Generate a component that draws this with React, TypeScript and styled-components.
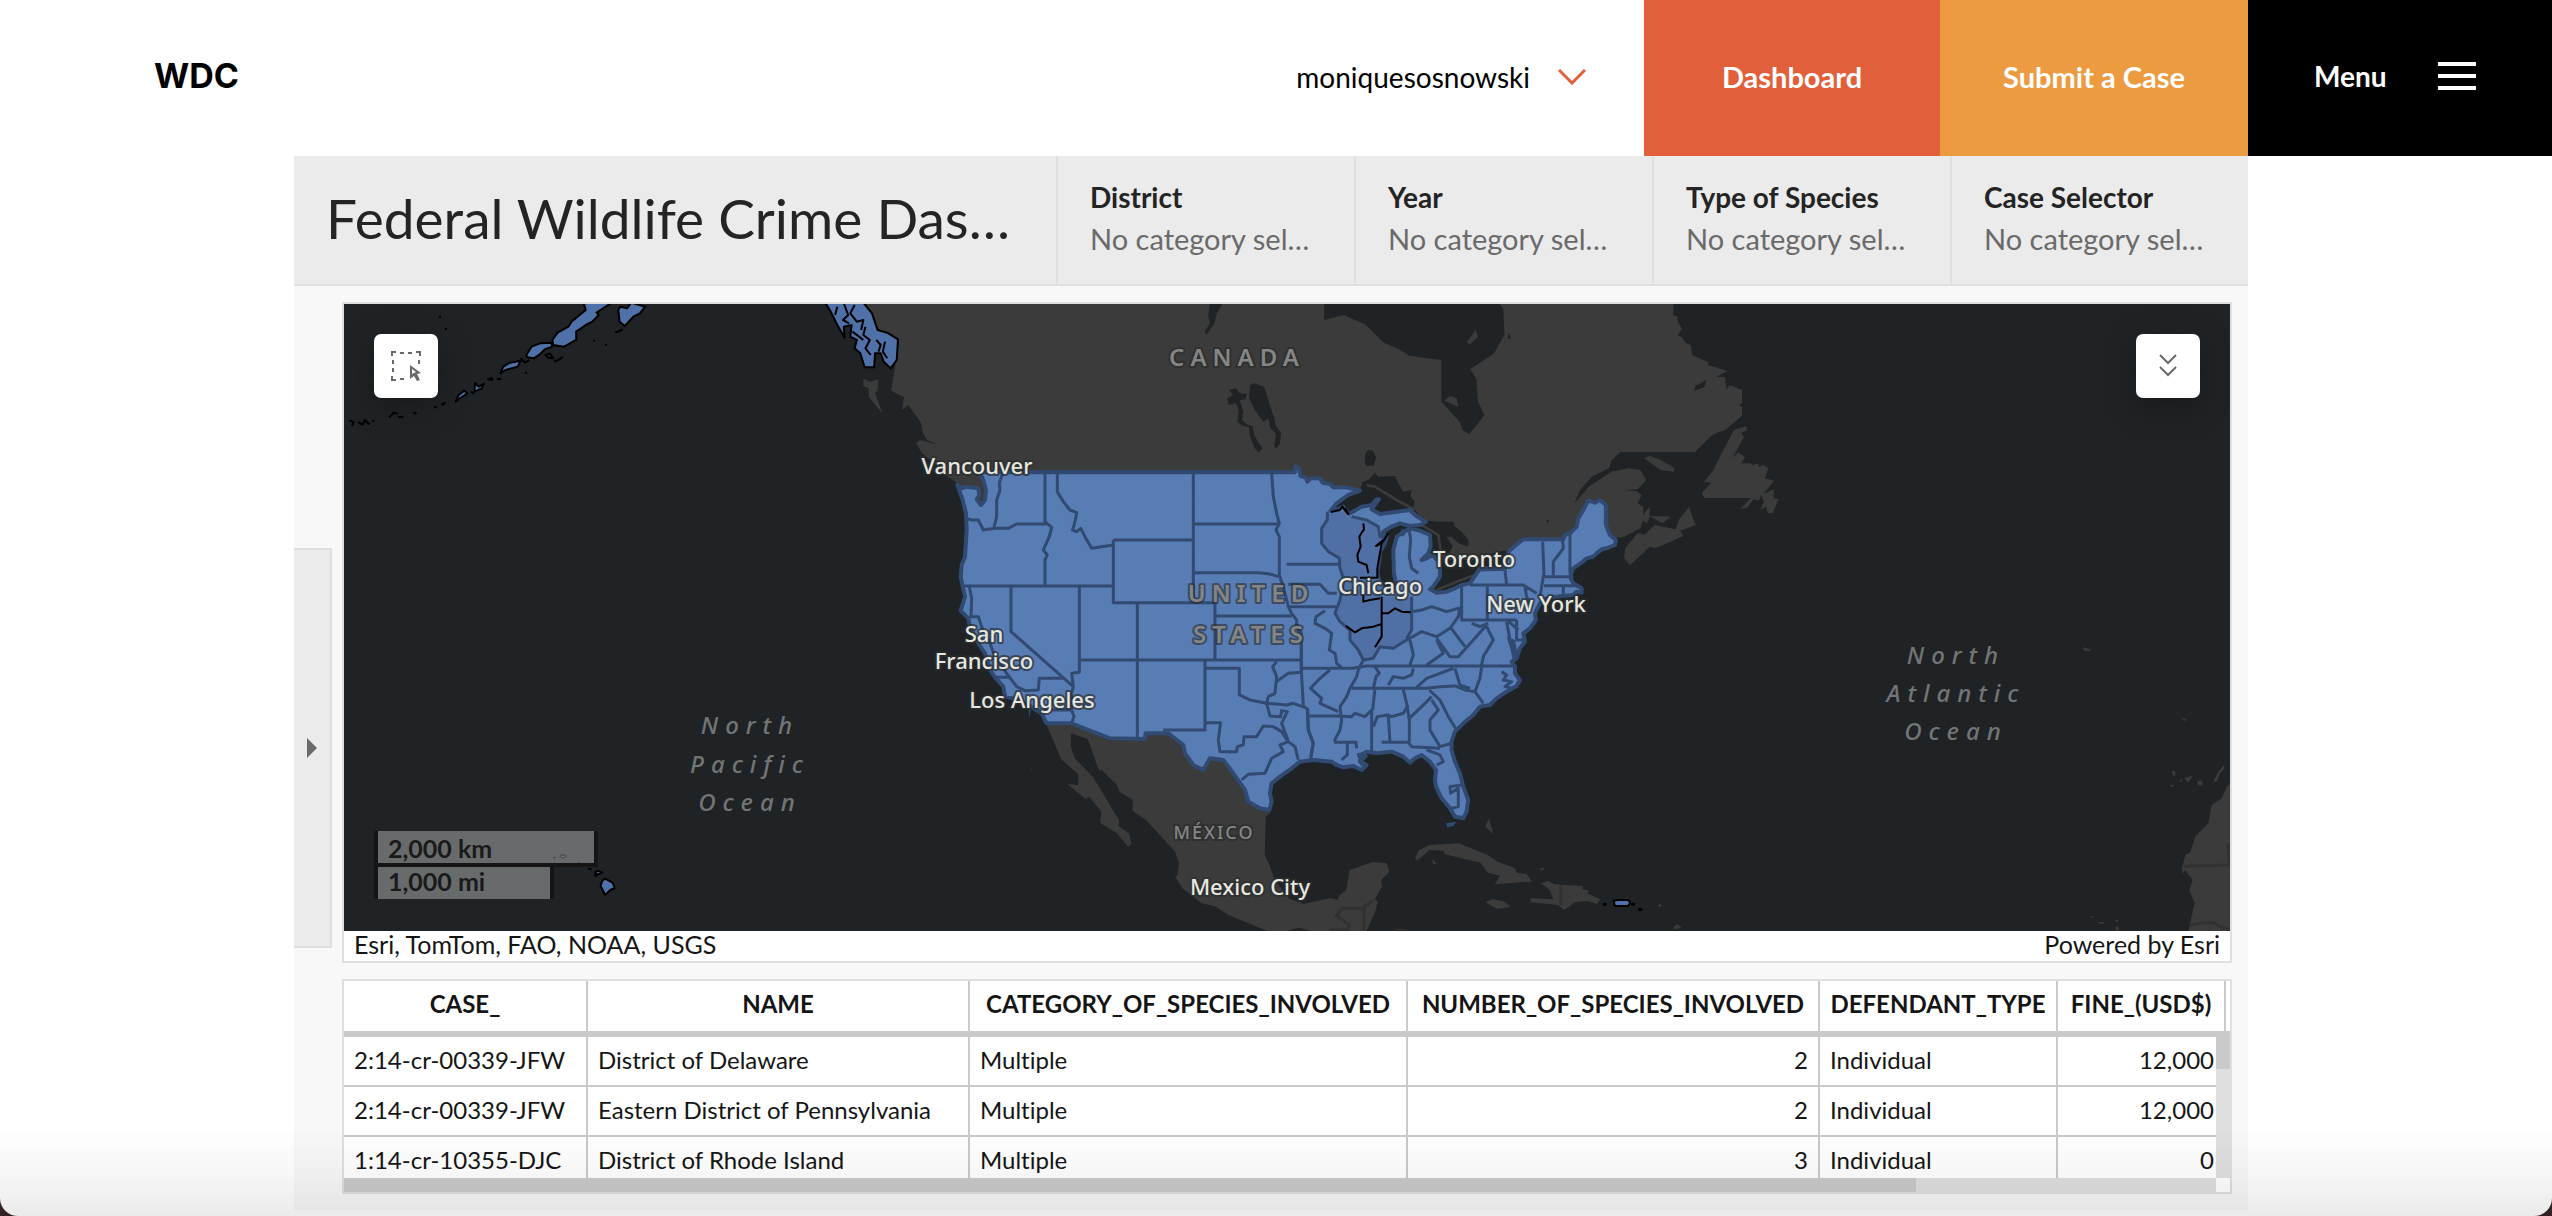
import React from "react";
import styled, { createGlobalStyle } from "styled-components";

const GlobalStyle = createGlobalStyle`
  *, *::before, *::after { box-sizing: border-box; }
  html { background: #3a2426; }
  body {
    margin: 0;
    color: #151515;
    font-family: Lato, "Open Sans", sans-serif;
    font-size: 24px;
    font-variant-ligatures: none;
    line-height: 32px;
  }
  button { margin: 0; padding: 0; border: 0; font: inherit; font-variant-ligatures: none; color: inherit; cursor: pointer; }
  a { color: inherit; text-decoration: none; }
`;

/* ---------- page shell ---------- */

const Page = styled.div`
  display: flex;
  flex-direction: column;
  height: 100vh;
  padding-bottom: 6px;
  border-radius: 0 0 18px 18px;
  background: #ffffff;
  overflow: hidden;
`;

const TopBar = styled.header`
  display: flex;
  flex: none;
  height: 156px;
  font-size: 28px;
  line-height: 36px;
`;

const Brand = styled.a`
  display: flex;
  align-items: center;
  margin-right: auto;
  padding: 0 0 4px 154px;
  color: #000000;
  font-family: Inter, sans-serif;
  font-size: 34px;
  font-weight: 700;
`;

const UserMenu = styled.button`
  display: flex;
  align-items: center;
  gap: 28px;
  padding: 0 58px 2px 0;
  background: none;
  color: #000000;
`;

const NavLink = styled.a<{ $bg: string; $width: number }>`
  display: flex;
  align-items: center;
  justify-content: center;
  width: ${(p) => p.$width}px;
  padding-bottom: 2px;
  background: ${(p) => p.$bg};
  color: #ffffff;
  font-size: 29px;
  font-weight: 700;
`;

const MenuButton = styled.button`
  display: flex;
  align-items: center;
  justify-content: space-between;
  width: 304px;
  padding: 0 76px 4px 66px;
  background: #000000;
  color: #ffffff;
  font-weight: 700;
`;

const Burger = styled.span`
  display: block;
  width: 38px;
  height: 28px;
  border-top: 4px solid #ffffff;
  border-bottom: 4px solid #ffffff;
  padding: 8px 0;
  &::before { content: ""; display: block; height: 4px; background: #ffffff; }
`;

/* ---------- dashboard ---------- */

const Dashboard = styled.main`
  display: flex;
  flex: 1;
  flex-direction: column;
  min-height: 0;
  margin: 0 304px 0 294px;
  background: #f8f8f8;
`;

const DashHeader = styled.div`
  display: flex;
  flex: none;
  height: 130px;
  border-bottom: 2px solid #dfdfdf;
  background: #ebebeb;
`;

const DashTitle = styled.h1`
  flex: 1;
  min-width: 0;
  margin: 0;
  padding: 0 32px;
  color: #242424;
  font-size: 55px;
  font-weight: 400;
  line-height: 124px;
  white-space: nowrap;
`;

const Selector = styled.button`
  display: flex;
  flex-direction: column;
  justify-content: center;
  gap: 6px;
  width: 298px;
  padding: 0 32px 4px;
  border-left: 2px solid #dfdfdf;
  background: none;
  font-size: 28px;
  line-height: 36px;
  text-align: left;
  white-space: nowrap;
`;

const SelectorName = styled.span`
  color: #242424;
  font-weight: 700;
`;

const SelectorValue = styled.span`
  color: #6a6a6a;
  font-size: 29px;
`;

const DashBody = styled.div`
  display: flex;
  flex: 1;
  align-items: center;
  gap: 10px;
  min-height: 0;
`;

const Drawer = styled.button`
  display: flex;
  flex: none;
  align-items: center;
  justify-content: center;
  width: 38px;
  height: 400px;
  border: 2px solid #dfdfdf;
  border-left: 0;
  background: #ebebeb;
`;

const Widgets = styled.div`
  display: flex;
  flex: 1;
  flex-direction: column;
  align-self: stretch;
  gap: 16px;
  min-width: 0;
  padding: 16px 16px 16px 0;
`;

const Card = styled.section<{ $grow?: boolean }>`
  display: flex;
  flex-direction: column;
  flex: ${(p) => (p.$grow ? "1" : "none")};
  min-height: 0;
  border: 2px solid #dfdfdf;
  background: #ffffff;
`;

const MapView = styled.div`
  position: relative;
  flex: 1;
  min-height: 0;
  background: #1f2325;
  overflow: hidden;
`;

const MapSvg = styled.svg`
  display: block;
  width: 100%;
  height: 100%;
`;

const MapTool = styled.button<{ $side: "left" | "right" }>`
  position: absolute;
  top: 30px;
  ${(p) => p.$side}: 30px;
  display: flex;
  align-items: center;
  justify-content: center;
  width: 64px;
  height: 64px;
  border-radius: 7px;
  background: #ffffff;
  box-shadow: 0 8px 32px rgba(0, 0, 0, 0.25);
`;

const ScaleBar = styled.div`
  position: absolute;
  left: 30px;
  bottom: 32px;
  display: flex;
  flex-direction: column;
  align-items: flex-start;
  color: #1a1a1a;
  font-size: 25px;
  font-weight: 700;
`;

const ScaleRow = styled.div<{ $width: number; $first?: boolean }>`
  width: ${(p) => p.$width}px;
  height: ${(p) => (p.$first ? 36 : 32)}px;
  padding-left: 10px;
  border: solid #151515;
  border-width: ${(p) => (p.$first ? "0 4px 4px" : "0 4px")};
  background: rgba(255, 255, 255, 0.33);
  background-clip: padding-box;
  line-height: ${(p) => (p.$first ? 34 : 28)}px;
`;

const Attribution = styled.footer`
  display: flex;
  flex: none;
  justify-content: space-between;
  height: 30px;
  padding: 0 10px;
  font-size: 25px;
  line-height: 27px;
`;

/* ---------- table ---------- */

const TableView = styled.div`
  position: relative;
  height: 211px;
  overflow: hidden;
`;

const Table = styled.table`
  width: 100%;
  table-layout: fixed;
  border-collapse: separate;
  border-spacing: 0;
  color: #151515;
  white-space: nowrap;
`;

const HeadCell = styled.th`
  height: 56px;
  padding: 0 0 4px;
  border-right: 2px solid #cacaca;
  border-bottom: 6px solid #cacaca;
  font-weight: 700;
  text-align: center;
  &:last-child { border-right: 0; }
`;

const Cell = styled.td<{ $numeric?: boolean }>`
  height: 50px;
  padding: 0 10px 3px;
  border-right: 2px solid #cacaca;
  border-bottom: 2px solid #cacaca;
  text-align: ${(p) => (p.$numeric ? "right" : "left")};
  &:last-child { border-right: 0; }
`;

const ScrollX = styled.div`
  position: absolute;
  right: 0;
  bottom: 0;
  left: 0;
  height: 14px;
  padding-right: 14px;
  background: linear-gradient(to left, #ffffff 14px, #dfdfdf 14px);
  &::before { content: ""; display: block; width: 84%; height: 100%; background: #cacaca; }
`;

const ScrollY = styled.div`
  position: absolute;
  top: 50px;
  right: 0;
  bottom: 14px;
  width: 14px;
  background: #dfdfdf;
  &::before { content: ""; display: block; height: 38px; background: #cacaca; }
`;

const BottomFade = styled.div`
  position: fixed;
  right: 0;
  bottom: 0;
  left: 0;
  height: 90px;
  background: linear-gradient(to bottom, rgba(0, 0, 0, 0), rgba(0, 0, 0, 0.03) 50%, rgba(0, 0, 0, 0.08));
  pointer-events: none;
`;

/* ---------- map drawing ---------- */

const Land = styled.path`
  fill: #3a3b3a;
`;

const Water = styled.path`
  fill: #1f2325;
`;

const LandBorder = styled.path`
  fill: none;
  stroke: #303130;
  stroke-width: 3px;
  vector-effect: non-scaling-stroke;
`;

const District = styled.path`
  fill: #587cb4;
  stroke: #304a71;
  stroke-width: 4px;
  stroke-linejoin: round;
  vector-effect: non-scaling-stroke;
`;

const DistrictLine = styled(District)`
  fill: none;
  stroke-width: 3px;
`;

const Shade = styled.path`
  fill: #4f6fa5;
`;

const Coast = styled.path`
  fill: #4f71a8;
  stroke: #000000;
  stroke-width: 2px;
  stroke-linejoin: round;
  vector-effect: non-scaling-stroke;
`;

const BlackLine = styled(Coast)`
  fill: none;
`;

const Place = styled.text<{ $kind: "city" | "country" | "ocean" | "small" }>`
  font-family: "Noto Sans", "Open Sans", sans-serif;
  text-anchor: middle;
  paint-order: stroke;
  stroke-linejoin: round;
  ${(p) =>
    p.$kind === "city" &&
    "font-size: 22px; font-weight: 500; fill: #e6e7e0; stroke: rgba(44,46,46,.7); stroke-width: 4px;"}
  ${(p) =>
    p.$kind === "country" &&
    "font-size: 24px; font-weight: 600; fill: #858585; letter-spacing: 6px; stroke: rgba(40,42,42,.6); stroke-width: 4px;"}
  ${(p) =>
    p.$kind === "small" &&
    "font-size: 18px; font-weight: 500; fill: #858585; letter-spacing: 2px; stroke: rgba(40,42,42,.6); stroke-width: 4px;"}
  ${(p) =>
    p.$kind === "ocean" &&
    "font-size: 24px; font-style: italic; font-weight: 500; fill: #727576; letter-spacing: 7px;"}
`;

type Label = [string, number, number, "city" | "country" | "ocean" | "small"];

const labels: Label[] = [
  ["CANADA", 1237, 366, "country"],
  ["UNITED", 1251, 602, "country"],
  ["STATES", 1251, 643, "country"],
  ["MÉXICO", 1214, 839, "small"],
  ["Vancouver", 977, 474, "city"],
  ["San", 984, 642, "city"],
  ["Francisco", 984, 669, "city"],
  ["Los Angeles", 1032, 708, "city"],
  ["Chicago", 1380, 594, "city"],
  ["Toronto", 1474, 567, "city"],
  ["New York", 1536, 612, "city"],
  ["Mexico City", 1250, 895, "city"],
  ["North", 750, 734, "ocean"],
  ["Pacific", 750, 773, "ocean"],
  ["Ocean", 750, 811, "ocean"],
  ["North", 1956, 664, "ocean"],
  ["Atlantic", 1956, 702, "ocean"],
  ["Ocean", 1956, 740, "ocean"],
];

const westLines = `M308,100 L298,130 300,150 290,180 290,230 282,262
M198,235 L215,240 235,240 250,270 285,265 325,265 350,252 440,252
M435,100 V245 L455,262 448,290 430,330 442,345 435,360 V438
M472,100 V155 L490,185 510,210 530,218 525,245 518,270 530,275 542,265 555,290 575,325 605,320 640,315
M188,438 H638 M640,300 V488 H945 M640,300 H880 M880,100 V488 M880,398 H1075 L1110,402 1135,410 M880,252 H1135
M1115,100 L1120,170 1130,220 1138,250 1128,270 1138,290 V405 L1150,440 1165,500 1175,520 1190,540 1190,560 1204,580 V700
M538,438 V697 L515,700 520,740 515,760 515,810 522,830 515,850
M712,488 V895 M945,488 V660 M945,528 H1175 M538,660 H1204 M333,438 V575 L520,740
M208,440 L215,475 213,530 235,530 245,560 270,610 285,650 320,700 350,740 375,752 415,750 418,715 H490
M285,712 H330 M430,810 H520
M915,660 V870 H790 M915,685 H1018 V765 L1050,780 1100,790 1160,795 1180,790 1222,805
M918,848 H962 L955,900 960,935 1010,935 1012,920 1030,915 1032,890 1070,890 1090,858 1120,860 1145,875 1165,905 1160,890 1145,850 1162,815 1145,812 1142,830 1110,828 1100,790 1105,770 1125,760 1130,710 1118,680 1130,665
M1130,725 L1165,700 1204,697 M1222,805 L1225,870 1240,910 1232,960
M1025,1020 L1045,1003 1095,1000 1115,955 1150,935 1140,915 1165,905 1185,920 1195,960 M1165,500 H1308 M1160,373 H1318`;

const eastLines = `M262,215 V240 L245,265 245,310 265,335 298,355 300,385 312,420 300,480 285,520 300,545 330,570 330,600 355,630 370,660 355,690 350,710 330,745 320,770 300,800 305,840 300,870 282,905
M145,433 H240 L265,460 290,460 M255,512 L228,530 225,550 255,565 275,580 268,630 285,640 290,670 305,682
M185,685 H340 L355,682 380,678 H820 M184,610 V690 L190,800
M270,690 L240,715 212,745 245,775 240,790 295,815 M203,828 H300 L335,830 345,820 375,830 395,810
M203,805 L205,870 220,910 212,950 M282,907 H348 L350,925 M322,910 V945 L305,960 M395,810 V935
M335,745 H560 L600,740 645,738 675,750 705,755 M405,745 L398,810 M490,750 L500,790 508,840 V905
M400,860 L412,830 445,825 455,830 490,820 505,795 M445,830 L450,905 M425,907 H505 L515,920 600,925
M400,745 L408,710 418,700 405,680 M445,735 L460,710 490,715 515,705 520,685 M530,742 L560,715 600,700 640,685
M645,685 L660,735 690,745 M725,680 L720,715 705,755 730,790 M568,750 L600,780 625,830 650,870
M508,835 L545,800 575,770 M575,780 L595,810 570,840 570,870 600,920 635,910
M560,930 L600,945 610,965 590,975 M665,1035 L630,1040 632,1060 655,1045 655,1100 635,1105
M515,515 L545,510 575,500 620,515 655,505 M515,470 V570 L500,595
M370,660 L400,655 420,620 460,625 500,600 545,575 590,590 630,565 655,530 660,500
M510,600 L520,645 510,675 M590,600 L610,640 560,675 M590,595 L630,650 655,650 740,555 M630,560 L675,620
M740,560 L760,600 730,650 725,675 M665,440 V540 H830 M742,440 V540 M690,435 H850 L890,460 M695,550 L720,560 745,550
M830,540 V600 L860,600 M800,545 L810,600 825,650 M715,390 L800,388 M795,390 L800,435 M800,540 L835,570
M908,305 L912,400 905,440 M968,300 L970,325 940,365 940,405 M990,280 V400 M915,410 H1000 M912,437 H1010 M970,440 V465
M905,440 L900,470 M855,440 L860,470 875,500 M335,230 L380,240 415,260 420,290 435,280 M508,270 L512,300 508,350 515,385 535,400
M785,695 L800,705 790,720 815,725 795,740 815,745`;

const usOutline = `M172,135 L185,145 200,140 235,145 238,165 230,178 243,195 255,180 258,150 250,120 240,97 H1185 L1187,78 1198,88
1202,108 1218,112 1222,125 1232,115 1260,115 1268,128 1290,132 1300,142 1340,142 1380,152 1345,165 1310,190 1290,215 1310,208 1330,200 1345,222
1360,215 1385,200 1415,195 1430,178 1437,178 1420,200 1415,208 1440,222 1490,215 1530,210 1545,225 1560,235 1578,245 1560,255
1530,258 1500,250 1470,262 1450,275 1438,315 1462,285 1455,310 1440,335 1438,360 1432,400 1440,430 1450,445 1470,450 1488,430
1482,400 1480,330 1490,290 1505,280 1530,265 1560,272 1590,285 1592,320 1585,340 1565,360 1580,355 1598,345 1620,370 1620,410
1600,440 1590,448 1610,458 1640,455 1665,445 1685,435 1710,430 1740,385 1815,385 1825,335 1860,305 1870,298 1990,298 1995,285
2010,280 2030,260 2035,235 2050,210 2065,182 2085,188 2100,180 2118,195 V255 L2130,285 2148,300 2145,315 2120,325 2105,328
2090,340 2080,350 2060,355 2045,368 2020,385 2010,410 2020,430 2045,445 2045,458 2030,455 2020,465 1985,468 1940,475 1920,490
1905,520 1908,540 1890,565 1870,580 1875,605 1860,625 1850,655 1835,665 1845,680 1845,700 1860,720 1850,738 1820,755 1790,775
1770,795 1740,800 1720,825 1690,850 1665,875 1655,905 1655,930 1665,965 1680,1000 1690,1040 1705,1080 1700,1115 1690,1135
1665,1130 1650,1105 1625,1075 1608,1040 1605,1020 1608,990 1590,965 1565,945 1545,955 1530,968 1510,950 1475,935 1430,940
1400,935 1385,945 1380,965 1400,975 1385,990 1360,978 1330,982 1310,975 1295,965 1240,960 1200,965 1175,985 1140,1010
1115,1030 1110,1060 1115,1085 1108,1110 1080,1105 1045,1085 1035,1050 1000,1000 970,960 930,955 910,990 880,975 855,940
850,915 805,880 737,880 735,897 630,895 560,868 515,850 440,850 425,820 400,805 360,780 315,770 310,740 285,712 270,690
255,640 235,610 210,560 205,535 182,512 195,470 188,440 182,410 185,375 195,350 200,270 198,220 188,180Z`;

function NorthAmericaMap() {
  return (
    <MapSvg viewBox="344 304 1886 627" preserveAspectRatio="xMidYMid slice" role="img" aria-label="Map of federal judicial districts">
      {/* Canada, with the Atlantic and Hudson Bay shores */}
      <Land
        d="M861,304 L880,330 898,340 895,368 891,390 897,394 904,397 902,410 908,405 917,417 921,423 923,433 927,440 936,444 920,440 916,443
        922,453 935,464 944,474 957,483 1000,560 H1560 L1606,500 1620,452 H1700 L1760,400 1780,300Z"
      />
      <g transform="translate(900 290) scale(.574 .3333)">
        <Water d="M1240,545 L1270,535 1240,545 1200,590 1175,640 1185,600 1205,560 1235,535 1240,510 1255,486 1385,486 1415,435 1427,425 1445,418 1467,388 V350 L1462,345 1467,340 V300 L1445,285 1440,300 1437,262 1422,260 1441,243 1408,225 1407,215 1392,205 1380,195 1378,165 1368,158 1362,140 1355,138 1362,115 1355,95 1355,80 1347,75 1348,30 1568,30 V800 L1255,745 1290,715 1300,680 1285,640 1290,610 1260,600 1285,598 1300,570 1290,540 1270,534Z" />
        <Land d="M1240,545 L1270,534 1290,540 1300,570 1285,598 1260,600 1283,603 1292,615 1285,640 1295,650 1295,690 1290,715 1262,740 1246,745 1220,700 1180,640 1200,590Z" />
        <Water d="M739,42 V90 L773,75 810,103 843,158 870,178 887,197 943,210 V335 L975,395 980,420 992,432 1005,405 1018,375 1007,335 1004,265 993,238 1035,190 1053,135 1051,55 1044,42Z" />
        <Land d="M1003,120 L1007,140 992,165 988,155Z M958,317 L970,325 973,350 948,332Z" />
        <Water d="M540,42 H562 L552,70 548,100 534,134 531,125 540,100 537,75Z M610,285 L618,280 634,290 640,320 645,350 652,385 654,405 664,430 662,460 656,475 652,470 655,430 645,415 642,385 633,395 620,365 608,325Z M573,300 L585,295 592,310 604,312 602,328 592,330 598,365 596,390 603,402 615,410 617,435 625,460 632,475 625,487 618,475 610,440 608,412 597,408 588,395 590,360 585,340 573,345 570,325 580,315Z M812,485 L822,480 829,500 825,525 812,528 810,505Z M1060,128 L1065,145 1059,147Z M1383,303 L1386,287 1405,270 1401,292Z" />
      </g>
      <g transform="translate(1600 290) scale(.4209 .3333)">
        <Land d="M118,770 L130,775 150,765 198,738 190,722 228,705 222,690 212,650 187,690 180,718 130,705 105,735 90,728 60,775 57,805 72,825Z" />
        <Land d="M348,408 V422 L335,428 342,440 315,503 328,488 345,500 336,520 355,520 362,525 375,520 378,530 388,525 400,535 392,565 413,572 390,610 400,605 413,598 412,625 424,628 410,670 398,670 395,650 380,660 390,635 382,615 378,632 365,628 350,653 334,656 358,624 248,624 242,608 265,578 247,575 270,540 275,525 318,420Z M105,505 L118,498 145,510 176,533 V545 L143,540Z M118,678 L168,680 148,700 138,692Z M105,670 L118,650 118,680 112,700 100,690Z" />
      </g>

      {/* Great Lakes */}
      <g transform="translate(1240 440) scale(.3333)">
        <Water d="M360,150 L368,125 385,120 405,98 415,110 465,108 475,130 490,155 515,150 512,170 525,185 520,200 535,225 540,240 600,245 640,245 645,260 665,275 685,300 685,320 655,310 635,290 620,290 638,320 625,345 600,340 595,410 570,440 600,425 640,405 710,400 700,420 655,450 600,465 560,455 500,440 420,460 400,410 415,340 440,270 430,230 325,230 260,215 320,165Z M700,385 L735,345 790,332 835,330 800,395Z M375,45 L385,30 400,35 408,55 400,78 375,72Z M920,240 H926 V246 H920Z" />
        <path d="M380,135 L405,140 470,180 525,210 M545,255 L595,285 603,340 M590,450 L650,425 710,403" fill="none" stroke="#3a3b3a" strokeWidth="8" />
      </g>

      {/* Mexico, Central America and the Caribbean */}
      <g transform="translate(940 700) scale(.4847 .3333)">
        <Land d="M220,75 L250,178 285,222 V255 L263,252 300,297 308,290 333,335 330,368 365,400 388,440 395,432 390,400 368,378 370,362 330,265 315,230 278,175 270,140 V100 L305,118 325,200 330,215 332,208 365,255 370,275 398,300 397,332 425,360 485,455 493,490 490,525 485,530 500,565 540,610 570,620 595,645 675,693 H880 L898,635 903,605 897,597 912,560 910,540 927,515 922,490 893,486 845,510 838,570 825,585 820,600 805,594 750,612 720,595 690,540 680,495 670,465 672,350 680,340 685,300 600,60 450,50 270,40Z" />
        <Water d="M715,693 L740,683 765,693Z" />
        <LandBorder d="M895,600 L872,625 H830 L818,648 845,675 840,690 H805 M875,625 V690" />
        <Land d="M980,475 L988,450 1010,435 1070,430 1130,465 1150,485 1185,503 1190,518 1210,522 1222,545 1145,553 1155,527 1130,518 1115,488 1040,462 1040,452 1010,450 985,482Z M1015,478 L1025,490 1018,494Z M1125,607 L1140,597 1165,605 1177,620 1150,627Z M1240,550 L1255,543 1268,553 1327,558 1325,568 1340,572 1335,580 1362,598 1355,612 1335,603 1310,607 1288,630 1275,615 1218,607 V594 L1265,598 1258,570Z M1132,355 L1142,402 1125,380Z M1238,508 L1243,502 1248,508 1238,512Z M1481,616 L1486,612 1489,618 1483,621Z M1513,680 L1522,672 1530,684 1515,688Z M185,203 L189,208 189,215Z M933,690 L950,686 972,691Z" />
        <LandBorder d="M1281,555 V615" />
        <Coast d="M1390,602 L1398,600 H1420 L1424,608 1420,618 H1392Z M1370,612 h3 v3 h-3Z M1428,611 h4 v3 h-4Z M1442,626 h5 v4 h-5Z" />
      </g>

      {/* West Africa and the eastern Atlantic islands */}
      <g transform="translate(1860 620) scale(.3333)">
        <Land d="M1112,490 L1100,500 1085,535 1055,555 1045,610 1007,648 990,698 977,703 965,745 968,762 975,750 998,780 988,812 1004,848 985,935 H1112Z" />
        <LandBorder d="M972,739 L1108,735 1105,670 M988,915 L1030,908 1062,908 1085,922 1108,928" />
        <Land d="M973,475 L1000,465 985,488Z M1013,482 h12 l4,10 -8,6 -10,-6Z M1060,485 L1075,455 1092,435 1094,446 1080,460 1073,482Z M936,453 h10 v14 h-8Z M931,494 h10 v6 h-8Z M960,478 h6 v8 h-5Z M669,82 L690,88 692,93 672,92Z M962,294 L978,296 977,304Z M690,890 L704,888 698,894Z M716,906 H732 V911 H718Z M765,900 h9 v8Z M767,920 h9 v12h-8Z" />
      </g>

      {/* Alaska and the Aleutians */}
      <g transform="translate(280 290) scale(.4337 .3333)">
        <Coast d="M700,38 L705,60 672,95 665,110 640,128 628,150 630,165 655,170 683,150 683,125 705,105 720,95 735,75 730,68 765,38Z M780,60 L785,50 800,55 810,38 842,50 830,70 815,80 795,108 783,95Z M568,195 L580,170 600,160 625,158 628,170 610,178 600,192 585,205 570,202Z M508,250 L515,230 530,218 555,212 548,230 520,240Z M450,280 L458,290 470,282 465,295 448,305Z M405,335 L412,315 425,302 432,310 415,325Z" />
        <Coast d="M1257,38 H1345 L1365,70 1378,120 1400,128 1425,148 1422,210 1408,235 1392,215 1385,190 1372,190 1370,232 1348,232 1338,190 1325,175 1330,150 1315,140 1318,105 1300,110 1302,143 1285,105 1270,65Z" />
        <BlackLine d="M1300,40 L1310,75 1298,90 1312,100 M1325,45 L1315,70 1330,95 1345,90 1340,120 M1350,110 L1345,135 1360,150 1350,175 1362,195 M1375,150 L1385,165 1380,185 M1395,155 L1390,185 1400,205 M1320,125 L1345,150 M1285,50 L1280,75" />
        <BlackLine d="M366,80 h5 M380,117 h5 M480,268 L488,264 490,270Z M500,268 L510,266 M555,205 L565,218 575,210 M565,248 h5 M612,195 L622,190 630,205 618,203Z M632,215 L645,208 652,200 M772,128 L782,124 790,118 M722,152 h4 M750,165 h4 M355,352 h6 M372,345 L382,338 M440,305 L448,312 M252,382 L262,368 272,372 M272,380 L284,382 M307,370 h8 M160,392 L170,396 166,408 M180,396 L190,404 196,390 206,404 M215,395 V390" />
        <Land d="M1345,265 L1360,275 1380,268 1378,300 1372,310 1390,372 1358,322 1357,295 1345,288Z" />
      </g>

      {/* Hawaii */}
      <g transform="translate(280 600) scale(.4464 .3333)">
        <Coast d="M722,842 L728,836 745,848 750,864 740,870 728,885 723,870 718,858Z M705,818 L712,812 722,818 712,824Z M690,806 L698,808 M704,826 L710,828 M628,768 L634,764 640,769 634,775Z M612,776 L617,770 M668,786 L674,792" />
      </g>

      {/* Contiguous United States */}
      <g transform="translate(900 440) scale(.3333)">
        <District d={usOutline} />
        <DistrictLine d={westLines} />
        <path d="M385,805 L392,810 388,835Z M387,985 L395,992Z" fill="#304a71" />
      </g>
      <g transform="translate(1240 440) scale(.3333)">
        <Shade d="M262,215 L300,210 325,225 345,235 410,252 418,290 430,300 415,350 412,415 428,425 430,470 H513 V570 L500,598 460,620 425,615 400,655 370,660 355,630 330,600 330,570 300,545 285,520 300,480 312,420 298,355 265,335 245,310 245,265Z" />
        <DistrictLine d={eastLines} />
        <BlackLine d="M370,250 L372,268 365,278 358,290 362,320 352,345 355,365 380,375 385,400 M360,413 H412 M445,280 L425,310 418,350 412,385 V415 M430,300 L408,318 420,312 M370,465 V485 L390,480 420,475 M425,470 V590 L405,622 M425,520 L445,520 465,505 485,515 512,517 M318,558 L345,577 365,565 400,560 425,552 M272,216 L300,210 307,200 325,222 315,205" />
        <path d="M485,265 L500,275 490,290 480,285Z M545,350 L565,348 550,362Z M800,590 L825,600 835,650 820,665 812,630Z M618,1150 L650,1145 640,1158 622,1162Z M350,940 L375,935 385,948 368,965 372,985 360,975Z" fill="#304a71" />
      </g>

      {labels.map(([text, x, y, kind], i) => (
        <Place key={i} x={x} y={y} $kind={kind}>
          {text}
        </Place>
      ))}
    </MapSvg>
  );
}

/* ---------- data ---------- */

const selectors = ["District", "Year", "Type of Species", "Case Selector"];

const columns = [
  { name: "CASE_", width: 244 },
  { name: "NAME", width: 382 },
  { name: "CATEGORY_OF_SPECIES_INVOLVED", width: 438 },
  { name: "NUMBER_OF_SPECIES_INVOLVED", width: 412 },
  { name: "DEFENDANT_TYPE", width: 238 },
  { name: "FINE_(USD$)", width: 168 },
];

const rows = [
  ["2:14-cr-00339-JFW", "District of Delaware", "Multiple", "2", "Individual", "12,000"],
  ["2:14-cr-00339-JFW", "Eastern District of Pennsylvania", "Multiple", "2", "Individual", "12,000"],
  ["1:14-cr-10355-DJC", "District of Rhode Island", "Multiple", "3", "Individual", "0"],
];

export default function App() {
  return (
    <>
      <GlobalStyle />
      <Page>
        <TopBar>
          <Brand href="#">WDC</Brand>
          <UserMenu>
            moniquesosnowski
            <svg width="28" height="16" viewBox="0 0 28 16" fill="none" stroke="#e15f3b" strokeWidth="3" aria-hidden="true">
              <path d="M1,1 L14,14 L27,1" />
            </svg>
          </UserMenu>
          <NavLink href="#" $bg="#e15f3b" $width={296}>Dashboard</NavLink>
          <NavLink href="#" $bg="#ec9b41" $width={308}>Submit a Case</NavLink>
          <MenuButton>
            Menu
            <Burger />
          </MenuButton>
        </TopBar>

        <Dashboard>
          <DashHeader>
            <DashTitle>Federal Wildlife Crime Das…</DashTitle>
            {selectors.map((name) => (
              <Selector key={name}>
                <SelectorName>{name}</SelectorName>
                <SelectorValue>No category sel…</SelectorValue>
              </Selector>
            ))}
          </DashHeader>

          <DashBody>
            <Drawer aria-label="Open side panel">
              <svg width="10" height="20" viewBox="0 0 10 20" aria-hidden="true">
                <path d="M0,0 L10,10 L0,20Z" fill="#6a6a6a" />
              </svg>
            </Drawer>
            <Widgets>
              <Card $grow>
                <MapView>
                  <NorthAmericaMap />
                  <MapTool $side="left" aria-label="Select features">
                    <svg width="32" height="32" viewBox="0 0 32 32" aria-hidden="true">
                      <path
                        d="M2,6 V2 H6 M10,3 H14 M18,3 H22 M26,2 H30 V6 M3,10 V14 M3,18 V22 M2,26 V30 H6 M10,29 H14 M29,10 V14"
                        fill="none"
                        stroke="#6a6a6a"
                        strokeWidth="2"
                      />
                      <path d="M20,15 L31,23 L27,24 L30,30 L27,31 L24,26 L20,29Z" fill="#6a6a6a" />
                      <path d="M22,19 L26,22 L22,24Z" fill="#ffffff" />
                    </svg>
                  </MapTool>
                  <MapTool $side="right" aria-label="Expand tools">
                    <svg width="32" height="32" viewBox="0 0 32 32" fill="none" stroke="#6a6a6a" strokeWidth="2" aria-hidden="true">
                      <path d="M8,5 L16,13 L24,5 M8,17 L16,25 L24,17" />
                    </svg>
                  </MapTool>
                  <ScaleBar>
                    <ScaleRow $first $width={224}>2,000 km</ScaleRow>
                    <ScaleRow $width={180}>1,000 mi</ScaleRow>
                  </ScaleBar>
                </MapView>
                <Attribution>
                  <span>Esri, TomTom, FAO, NOAA, USGS</span>
                  <a href="#">Powered by Esri</a>
                </Attribution>
              </Card>

              <Card>
                <TableView>
                  <Table>
                    <colgroup>
                      {columns.map((c) => (
                        <col key={c.name} width={c.width} />
                      ))}
                      <col />
                    </colgroup>
                    <thead>
                      <tr>
                        {columns.map((c) => (
                          <HeadCell key={c.name} scope="col">{c.name}</HeadCell>
                        ))}
                        <HeadCell as="td" />
                      </tr>
                    </thead>
                    <tbody>
                      {rows.map((row, r) => (
                        <tr key={r}>
                          {row.map((value, c) => (
                            <Cell key={c} $numeric={c === 3 || c === 5}>{value}</Cell>
                          ))}
                          <Cell />
                        </tr>
                      ))}
                    </tbody>
                  </Table>
                  <ScrollY />
                  <ScrollX />
                </TableView>
              </Card>
            </Widgets>
          </DashBody>
        </Dashboard>
      </Page>
      <BottomFade />
    </>
  );
}
